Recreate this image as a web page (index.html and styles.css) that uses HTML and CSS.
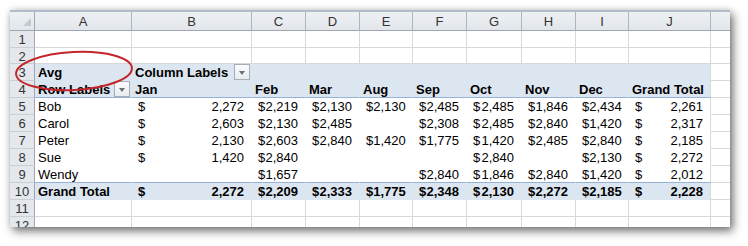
FILE: index.html
```html
<!DOCTYPE html>
<html>
<head>
<meta charset="utf-8">
<link rel="stylesheet" href="styles.css">
</head>
<body>
<div class="page">
  <div class="sheet">
    <!-- column headers -->
    <div class="corner"></div>
    <div class="ch">A</div><div class="ch">B</div><div class="ch">C</div><div class="ch">D</div><div class="ch">E</div>
    <div class="ch">F</div><div class="ch">G</div><div class="ch">H</div><div class="ch">I</div><div class="ch">J</div><div class="ch last"></div>

    <!-- row 1 -->
    <div class="rh">1</div>
    <div class="c"></div><div class="c"></div><div class="c"></div><div class="c"></div><div class="c"></div>
    <div class="c"></div><div class="c"></div><div class="c"></div><div class="c"></div><div class="c"></div><div class="c k"></div>
    <!-- row 2 -->
    <div class="rh">2</div>
    <div class="c"></div><div class="c"></div><div class="c"></div><div class="c"></div><div class="c"></div>
    <div class="c"></div><div class="c"></div><div class="c"></div><div class="c"></div><div class="c"></div><div class="c k"></div>
    <!-- row 3 -->
    <div class="rh">3</div>
    <div class="pv b txt">Avg</div>
    <div class="pv b txt withbtn">Column Labels<span class="dd"></span></div>
    <div class="pv"></div><div class="pv"></div><div class="pv"></div><div class="pv"></div>
    <div class="pv"></div><div class="pv"></div><div class="pv"></div><div class="pv jl"></div><div class="c k"></div>
    <!-- row 4 -->
    <div class="rh">4</div>
    <div class="pv b txt hb withbtn">Row Labels<span class="dd"></span></div>
    <div class="pv b txt hb">Jan</div><div class="pv b txt hb">Feb</div><div class="pv b txt hb">Mar</div>
    <div class="pv b txt hb">Aug</div><div class="pv b txt hb">Sep</div><div class="pv b txt hb">Oct</div>
    <div class="pv b txt hb">Nov</div><div class="pv b txt hb">Dec</div><div class="pv b txt hb jl">Grand Total</div><div class="c k"></div>
    <!-- row 5 -->
    <div class="rh">5</div>
    <div class="pw txt">Bob</div>
    <div class="pw acc"><span>$</span><span>2,272</span></div>
    <div class="pw acc"><span>$</span><span>2,219</span></div>
    <div class="pw acc"><span>$</span><span>2,130</span></div>
    <div class="pw acc"><span>$</span><span>2,130</span></div>
    <div class="pw acc"><span>$</span><span>2,485</span></div>
    <div class="pw acc"><span>$</span><span>2,485</span></div>
    <div class="pw acc"><span>$</span><span>1,846</span></div>
    <div class="pw acc"><span>$</span><span>2,434</span></div>
    <div class="pw acc jl"><span>$</span><span>2,261</span></div>
    <div class="c k"></div>
    <!-- row 6 -->
    <div class="rh">6</div>
    <div class="pw txt">Carol</div>
    <div class="pw acc"><span>$</span><span>2,603</span></div>
    <div class="pw acc"><span>$</span><span>2,130</span></div>
    <div class="pw acc"><span>$</span><span>2,485</span></div>
    <div class="pw"></div>
    <div class="pw acc"><span>$</span><span>2,308</span></div>
    <div class="pw acc"><span>$</span><span>2,485</span></div>
    <div class="pw acc"><span>$</span><span>2,840</span></div>
    <div class="pw acc"><span>$</span><span>1,420</span></div>
    <div class="pw acc jl"><span>$</span><span>2,317</span></div>
    <div class="c k"></div>
    <!-- row 7 -->
    <div class="rh">7</div>
    <div class="pw txt">Peter</div>
    <div class="pw acc"><span>$</span><span>2,130</span></div>
    <div class="pw acc"><span>$</span><span>2,603</span></div>
    <div class="pw acc"><span>$</span><span>2,840</span></div>
    <div class="pw acc"><span>$</span><span>1,420</span></div>
    <div class="pw acc"><span>$</span><span>1,775</span></div>
    <div class="pw acc"><span>$</span><span>1,420</span></div>
    <div class="pw acc"><span>$</span><span>2,485</span></div>
    <div class="pw acc"><span>$</span><span>2,840</span></div>
    <div class="pw acc jl"><span>$</span><span>2,185</span></div>
    <div class="c k"></div>
    <!-- row 8 -->
    <div class="rh">8</div>
    <div class="pw txt">Sue</div>
    <div class="pw acc"><span>$</span><span>1,420</span></div>
    <div class="pw acc"><span>$</span><span>2,840</span></div>
    <div class="pw"></div>
    <div class="pw"></div>
    <div class="pw"></div>
    <div class="pw acc"><span>$</span><span>2,840</span></div>
    <div class="pw"></div>
    <div class="pw acc"><span>$</span><span>2,130</span></div>
    <div class="pw acc jl"><span>$</span><span>2,272</span></div>
    <div class="c k"></div>
    <!-- row 9 -->
    <div class="rh">9</div>
    <div class="pw txt hb">Wendy</div>
    <div class="pw hb"></div>
    <div class="pw acc hb"><span>$</span><span>1,657</span></div>
    <div class="pw hb"></div>
    <div class="pw hb"></div>
    <div class="pw acc hb"><span>$</span><span>2,840</span></div>
    <div class="pw acc hb"><span>$</span><span>1,846</span></div>
    <div class="pw acc hb"><span>$</span><span>2,840</span></div>
    <div class="pw acc hb"><span>$</span><span>1,420</span></div>
    <div class="pw acc hb jl"><span>$</span><span>2,012</span></div>
    <div class="c k"></div>
    <!-- row 10 -->
    <div class="rh">10</div>
    <div class="pv b txt">Grand Total</div>
    <div class="pv b acc"><span>$</span><span>2,272</span></div>
    <div class="pv b acc"><span>$</span><span>2,209</span></div>
    <div class="pv b acc"><span>$</span><span>2,333</span></div>
    <div class="pv b acc"><span>$</span><span>1,775</span></div>
    <div class="pv b acc"><span>$</span><span>2,348</span></div>
    <div class="pv b acc"><span>$</span><span>2,130</span></div>
    <div class="pv b acc"><span>$</span><span>2,272</span></div>
    <div class="pv b acc"><span>$</span><span>2,185</span></div>
    <div class="pv b acc jl"><span>$</span><span>2,228</span></div>
    <div class="c k"></div>
    <!-- row 11 -->
    <div class="rh">11</div>
    <div class="c"></div><div class="c"></div><div class="c"></div><div class="c"></div><div class="c"></div>
    <div class="c"></div><div class="c"></div><div class="c"></div><div class="c"></div><div class="c"></div><div class="c k"></div>
    <!-- row 12 -->
    <div class="rh">12</div>
    <div class="c"></div><div class="c"></div><div class="c"></div><div class="c"></div><div class="c"></div>
    <div class="c"></div><div class="c"></div><div class="c"></div><div class="c"></div><div class="c"></div><div class="c k"></div>
  </div>
  <svg class="mark" width="748" height="246" viewBox="0 0 748 246">
    <ellipse cx="74" cy="71" rx="58" ry="19" transform="rotate(-3 74 71)" fill="none" stroke="#c3252b" stroke-width="2"/>
  </svg>
</div>
</body>
</html>
```

FILE: styles.css
```css
html, body {
  margin: 0;
  padding: 0;
  background: #ffffff;
}

.page {
  position: relative;
  width: 748px;
  height: 246px;
  padding: 10px 0 0 10px;
  box-sizing: border-box;
  font-family: "Liberation Sans", Arial, sans-serif;
  font-size: 13px;
  color: #000;
}

.sheet {
  width: 720px;
  height: 217px;
  overflow: hidden;
  border-top: 2px solid #b3bccb;
  box-sizing: border-box;
  background: #fff;
  box-shadow: 3px 4px 9px rgba(0, 0, 0, 0.55), 0 0 6px rgba(0, 0, 0, 0.12);
  display: grid;
  grid-template-columns: 25px 97px 120px 54px 54px 53px 54px 55px 54px 53px 82px 19px;
  grid-template-rows: 19px 17px 16px 17px 17px 17px 17px 17px 17px 17px 17px 17px 17px;
}

.sheet > div {
  box-sizing: border-box;
  overflow: hidden;
  white-space: nowrap;
}

.corner,
.ch {
  background: linear-gradient(#eef1f4, #e2e6eb);
  border-right: 1px solid #aeb5bf;
  border-bottom: 1px solid #9ea7b3;
}

.corner {
  position: relative;
  border-right-color: #9ea7b3;
}

.corner::after {
  content: "";
  position: absolute;
  right: 3px;
  bottom: 4px;
  width: 8px;
  height: 8px;
  background: #c3c9d1;
  clip-path: polygon(100% 0, 100% 100%, 0 100%);
}

.ch {
  text-align: center;
  color: #333;
  padding-top: 2px;
  line-height: 16px;
}

.ch.last {
  border-right: none;
}

.rh {
  background: #e4e8ed;
  border-right: 1px solid #9ea7b3;
  border-bottom: 1px solid #c9cfd7;
  text-align: center;
  color: #333;
  padding-top: 1px;
  line-height: 15px;
}

.c {
  border-right: 1px solid #d8d8d8;
  border-bottom: 1px solid #d8d8d8;
}

.c.k {
  border-right: none;
}

.pv,
.pw {
  border-right: 1px solid transparent;
  border-bottom: 1px solid transparent;
  padding-top: 1px;
  line-height: 15px;
}

.pv {
  background: #dce6f1;
}

.pw {
  background: #ffffff;
}

.jl {
  border-right-color: #d8d8d8;
}

.hb {
  border-bottom-color: #95b3d7;
}

.b {
  font-weight: bold;
}

.txt {
  padding-left: 3px;
}

.withbtn {
  display: flex;
  align-items: flex-start;
  padding-right: 1px;
}

.dd {
  margin-left: auto;
  margin-top: -1px;
  width: 16px;
  height: 16px;
  box-sizing: border-box;
  border: 1px solid #a7aeb8;
  background: linear-gradient(#fbfbfc, #e9ecf0);
  position: relative;
  flex: none;
}

.dd::after {
  content: "";
  position: absolute;
  left: 4px;
  top: 6px;
  width: 0;
  height: 0;
  border-left: 3.5px solid transparent;
  border-right: 3.5px solid transparent;
  border-top: 4px solid #6b6f75;
}

.acc {
  display: flex;
  justify-content: space-between;
  padding-left: 6px;
  padding-right: 7px;
}

.mark {
  position: absolute;
  left: 0;
  top: 0;
  pointer-events: none;
}
```
